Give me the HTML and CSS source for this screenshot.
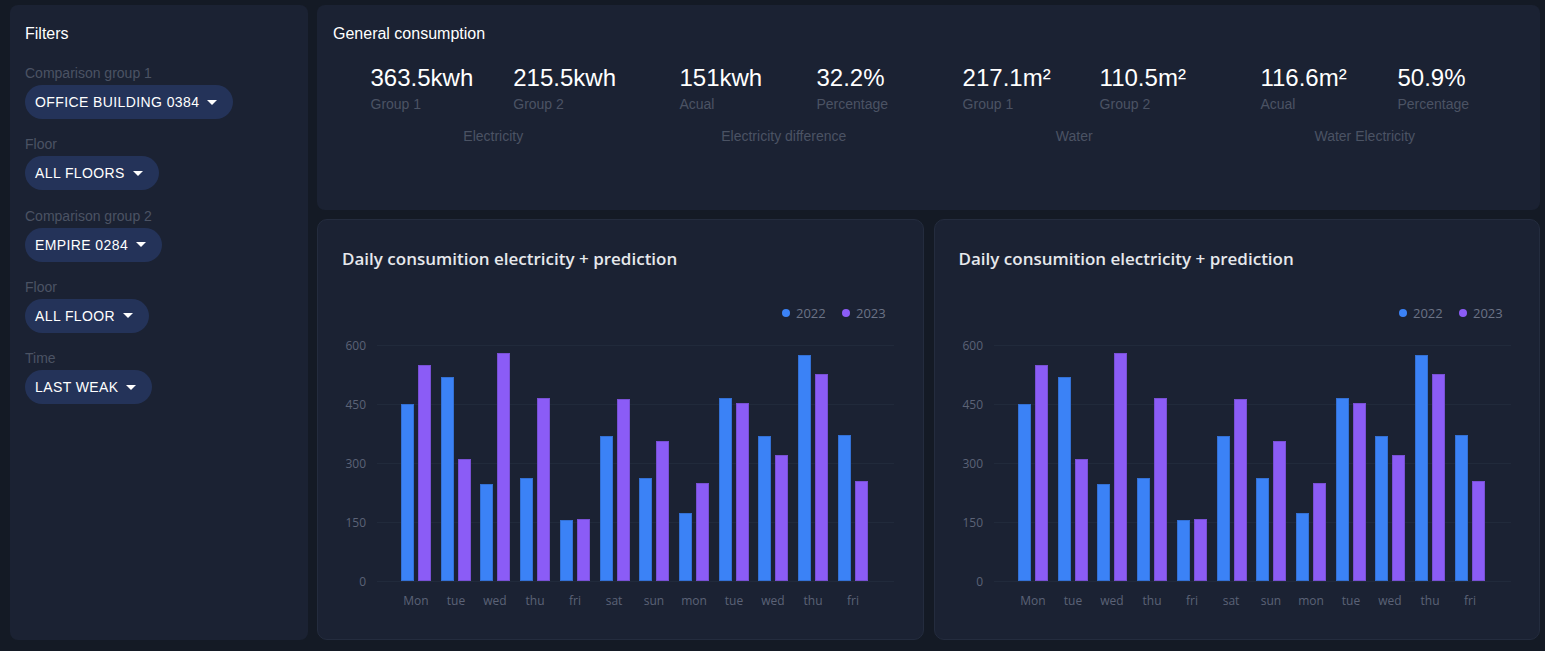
FILE: index.html
```html
<!DOCTYPE html>
<html lang="en">
<head>
<meta charset="utf-8">
<title>Consumption dashboard</title>
<link rel="stylesheet" href="styles.css">
</head>
<body>
<div class="page">
  <aside class="panel filters">
    <h2 class="panel-title">Filters</h2>
    <div class="field">
      <div class="field-label">Comparison group 1</div>
      <button class="pill">Office building 0384<span class="caret"></span></button>
    </div>
    <div class="field">
      <div class="field-label">Floor</div>
      <button class="pill">All floors<span class="caret"></span></button>
    </div>
    <div class="field">
      <div class="field-label">Comparison group 2</div>
      <button class="pill">Empire 0284<span class="caret"></span></button>
    </div>
    <div class="field">
      <div class="field-label">Floor</div>
      <button class="pill">All floor<span class="caret"></span></button>
    </div>
    <div class="field">
      <div class="field-label">Time</div>
      <button class="pill">Last weak<span class="caret"></span></button>
    </div>
  </aside>

  <main class="content">
    <section class="panel summary">
      <h2 class="panel-title">General consumption</h2>
      <div class="groups">
        <div class="group">
          <div class="stats">
            <div class="stat"><div class="stat-value">363.5kwh</div><div class="stat-label">Group 1</div></div>
            <div class="stat"><div class="stat-value">215.5kwh</div><div class="stat-label">Group 2</div></div>
          </div>
          <div class="group-label">Electricity</div>
        </div>
        <div class="group">
          <div class="stats">
            <div class="stat"><div class="stat-value">151kwh</div><div class="stat-label">Acual</div></div>
            <div class="stat"><div class="stat-value">32.2%</div><div class="stat-label">Percentage</div></div>
          </div>
          <div class="group-label">Electricity difference</div>
        </div>
        <div class="group">
          <div class="stats">
            <div class="stat"><div class="stat-value">217.1m²</div><div class="stat-label">Group 1</div></div>
            <div class="stat"><div class="stat-value">110.5m²</div><div class="stat-label">Group 2</div></div>
          </div>
          <div class="group-label">Water</div>
        </div>
        <div class="group">
          <div class="stats">
            <div class="stat"><div class="stat-value">116.6m²</div><div class="stat-label">Acual</div></div>
            <div class="stat"><div class="stat-value">50.9%</div><div class="stat-label">Percentage</div></div>
          </div>
          <div class="group-label">Water Electricity</div>
        </div>
      </div>
    </section>

    <div class="charts">
      <section class="card">
        <h3 class="card-title">Daily consumition electricity + prediction</h3>
        <svg class="chart" viewBox="0 0 605 368" xmlns="http://www.w3.org/2000/svg">
          <g class="legend">
            <circle class="dot-2022" cx="468" cy="42" r="4"/>
            <text x="478" y="42">2022</text>
            <circle class="dot-2023" cx="528" cy="42" r="4"/>
            <text x="538" y="42">2023</text>
          </g>
          <g class="grid">
            <line x1="59" x2="576" y1="74.5" y2="74.5"/>
            <line x1="59" x2="576" y1="133.5" y2="133.5"/>
            <line x1="59" x2="576" y1="192.5" y2="192.5"/>
            <line x1="59" x2="576" y1="251.5" y2="251.5"/>
            <line x1="59" x2="576" y1="310.5" y2="310.5"/>
          </g>
          <g class="y-axis">
            <text x="48" y="74">600</text>
            <text x="48" y="133">450</text>
            <text x="48" y="192">300</text>
            <text x="48" y="251">150</text>
            <text x="48" y="310">0</text>
          </g>
          <g class="bars-2022">
            <rect x="83.5" y="133.5" width="12" height="176"/>
            <rect x="123.5" y="106.5" width="12" height="203"/>
            <rect x="162.5" y="213.5" width="12" height="96"/>
            <rect x="202.5" y="207.5" width="12" height="102"/>
            <rect x="242.5" y="249.5" width="12" height="60"/>
            <rect x="282.5" y="165.5" width="12" height="144"/>
            <rect x="321.5" y="207.5" width="12" height="102"/>
            <rect x="361.5" y="242.5" width="12" height="67"/>
            <rect x="401.5" y="127.5" width="12" height="182"/>
            <rect x="440.5" y="165.5" width="12" height="144"/>
            <rect x="480.5" y="84.5" width="12" height="225"/>
            <rect x="520.5" y="164.5" width="12" height="145"/>
          </g>
          <g class="bars-2023">
            <rect x="100.5" y="94.5" width="12" height="215"/>
            <rect x="140.5" y="188.5" width="12" height="121"/>
            <rect x="179.5" y="82.5" width="12" height="227"/>
            <rect x="219.5" y="127.5" width="12" height="182"/>
            <rect x="259.5" y="248.5" width="12" height="61"/>
            <rect x="299.5" y="128.5" width="12" height="181"/>
            <rect x="338.5" y="170.5" width="12" height="139"/>
            <rect x="378.5" y="212.5" width="12" height="97"/>
            <rect x="418.5" y="132.5" width="12" height="177"/>
            <rect x="457.5" y="184.5" width="12" height="125"/>
            <rect x="497.5" y="103.5" width="12" height="206"/>
            <rect x="537.5" y="210.5" width="12" height="99"/>
          </g>
          <g class="x-axis">
            <text x="98" y="329">Mon</text>
            <text x="138" y="329">tue</text>
            <text x="177" y="329">wed</text>
            <text x="217" y="329">thu</text>
            <text x="257" y="329">fri</text>
            <text x="296" y="329">sat</text>
            <text x="336" y="329">sun</text>
            <text x="376" y="329">mon</text>
            <text x="416" y="329">tue</text>
            <text x="455" y="329">wed</text>
            <text x="495" y="329">thu</text>
            <text x="535" y="329">fri</text>
          </g>
        </svg>
      </section>

      <section class="card">
        <h3 class="card-title">Daily consumition electricity + prediction</h3>
        <svg class="chart" viewBox="0 0 605 368" xmlns="http://www.w3.org/2000/svg">
          <g class="legend">
            <circle class="dot-2022" cx="468" cy="42" r="4"/>
            <text x="478" y="42">2022</text>
            <circle class="dot-2023" cx="528" cy="42" r="4"/>
            <text x="538" y="42">2023</text>
          </g>
          <g class="grid">
            <line x1="59" x2="576" y1="74.5" y2="74.5"/>
            <line x1="59" x2="576" y1="133.5" y2="133.5"/>
            <line x1="59" x2="576" y1="192.5" y2="192.5"/>
            <line x1="59" x2="576" y1="251.5" y2="251.5"/>
            <line x1="59" x2="576" y1="310.5" y2="310.5"/>
          </g>
          <g class="y-axis">
            <text x="48" y="74">600</text>
            <text x="48" y="133">450</text>
            <text x="48" y="192">300</text>
            <text x="48" y="251">150</text>
            <text x="48" y="310">0</text>
          </g>
          <g class="bars-2022">
            <rect x="83.5" y="133.5" width="12" height="176"/>
            <rect x="123.5" y="106.5" width="12" height="203"/>
            <rect x="162.5" y="213.5" width="12" height="96"/>
            <rect x="202.5" y="207.5" width="12" height="102"/>
            <rect x="242.5" y="249.5" width="12" height="60"/>
            <rect x="282.5" y="165.5" width="12" height="144"/>
            <rect x="321.5" y="207.5" width="12" height="102"/>
            <rect x="361.5" y="242.5" width="12" height="67"/>
            <rect x="401.5" y="127.5" width="12" height="182"/>
            <rect x="440.5" y="165.5" width="12" height="144"/>
            <rect x="480.5" y="84.5" width="12" height="225"/>
            <rect x="520.5" y="164.5" width="12" height="145"/>
          </g>
          <g class="bars-2023">
            <rect x="100.5" y="94.5" width="12" height="215"/>
            <rect x="140.5" y="188.5" width="12" height="121"/>
            <rect x="179.5" y="82.5" width="12" height="227"/>
            <rect x="219.5" y="127.5" width="12" height="182"/>
            <rect x="259.5" y="248.5" width="12" height="61"/>
            <rect x="299.5" y="128.5" width="12" height="181"/>
            <rect x="338.5" y="170.5" width="12" height="139"/>
            <rect x="378.5" y="212.5" width="12" height="97"/>
            <rect x="418.5" y="132.5" width="12" height="177"/>
            <rect x="457.5" y="184.5" width="12" height="125"/>
            <rect x="497.5" y="103.5" width="12" height="206"/>
            <rect x="537.5" y="210.5" width="12" height="99"/>
          </g>
          <g class="x-axis">
            <text x="98" y="329">Mon</text>
            <text x="138" y="329">tue</text>
            <text x="177" y="329">wed</text>
            <text x="217" y="329">thu</text>
            <text x="257" y="329">fri</text>
            <text x="296" y="329">sat</text>
            <text x="336" y="329">sun</text>
            <text x="376" y="329">mon</text>
            <text x="416" y="329">tue</text>
            <text x="455" y="329">wed</text>
            <text x="495" y="329">thu</text>
            <text x="535" y="329">fri</text>
          </g>
        </svg>
      </section>
    </div>
  </main>
</div>
</body>
</html>
```

FILE: styles.css
```css
* {
  box-sizing: border-box;
}

html, body {
  margin: 0;
  height: 100%;
}

body {
  background: #141a25;
  color: #ffffff;
  font-family: "Liberation Sans", Arial, sans-serif;
  overflow: hidden;
}

.page {
  display: grid;
  grid-template-columns: 298px 1fr;
  gap: 9px;
  height: 651px;
  padding: 5px 5px 11px 10px;
}

.panel {
  background: #1b2233;
  border-radius: 8px;
}

.panel-title {
  margin: 0;
  font-size: 16px;
  line-height: 19px;
  font-weight: 400;
  color: #ffffff;
}

/* Filters */
.filters {
  padding: 19px 15px;
}

.filters .panel-title {
  margin-bottom: 22px;
}

.field {
  display: flex;
  flex-direction: column;
  align-items: flex-start;
  margin-bottom: 17.3px;
}

.field-label {
  font-size: 14px;
  line-height: 16px;
  color: #4b5364;
  margin-bottom: 4px;
}

.pill {
  display: inline-flex;
  align-items: center;
  gap: 8px;
  height: 34px;
  padding: 0 16px 0 10px;
  border: 0;
  border-radius: 17px;
  background: #243359;
  color: #ffffff;
  font-family: "Liberation Sans", Arial, sans-serif;
  font-size: 14px;
  letter-spacing: 0.4px;
  text-transform: uppercase;
  cursor: pointer;
}

.caret {
  width: 0;
  height: 0;
  border-left: 5px solid transparent;
  border-right: 5px solid transparent;
  border-top: 5px solid #ffffff;
}

/* Content */
.content {
  display: grid;
  grid-template-rows: 205px 1fr;
  gap: 9px;
  min-width: 0;
}

.summary {
  padding: 19px 15px 18px 16px;
}

.groups {
  display: flex;
  margin: 21px 15px 0;
}

.group {
  flex: 1;
  display: flex;
  flex-direction: column;
  align-items: center;
}

.stats {
  display: flex;
  gap: 40px;
}

.stat:first-child {
  min-width: 97px;
}

.stat-value {
  font-size: 24px;
  line-height: 28px;
  color: #ffffff;
}

.stat-label {
  margin-top: 4px;
  font-size: 14px;
  line-height: 16px;
  color: #4b5364;
}

.group-label {
  margin-top: 16px;
  font-size: 14px;
  line-height: 16px;
  color: #4b5364;
}

/* Charts */
.charts {
  display: grid;
  grid-template-columns: 1fr 1fr;
  gap: 10px;
  min-height: 0;
}

.card {
  background: #1b2233;
  border: 1px solid #242c3e;
  border-radius: 10px;
  overflow: hidden;
}

.card-title {
  margin: 0;
  padding: 27px 24px 0;
  font-family: "Open Sans", "Noto Sans", sans-serif;
  font-weight: 600;
  font-size: 17px;
  line-height: 24px;
  color: #e6e8ec;
}

.chart {
  display: block;
  width: 605px;
  height: 368px;
}

.chart text {
  font-family: "Open Sans", "Noto Sans", sans-serif;
  dominant-baseline: central;
}

.legend text {
  font-size: 13px;
  fill: #6b7386;
}

.dot-2022 {
  fill: #3b82f6;
}

.dot-2023 {
  fill: #8b5cf6;
}

.grid line {
  stroke: #212a3b;
  stroke-width: 1;
}

.y-axis text {
  font-size: 12px;
  fill: #5b6377;
  text-anchor: end;
}

.x-axis text {
  font-size: 12px;
  fill: #5b6377;
  text-anchor: middle;
}

.bars-2022 rect {
  fill: #3b82f6;
  stroke: #3370d4;
  stroke-width: 1;
}

.bars-2023 rect {
  fill: #8b5cf6;
  stroke: #7850d4;
  stroke-width: 1;
}
```
